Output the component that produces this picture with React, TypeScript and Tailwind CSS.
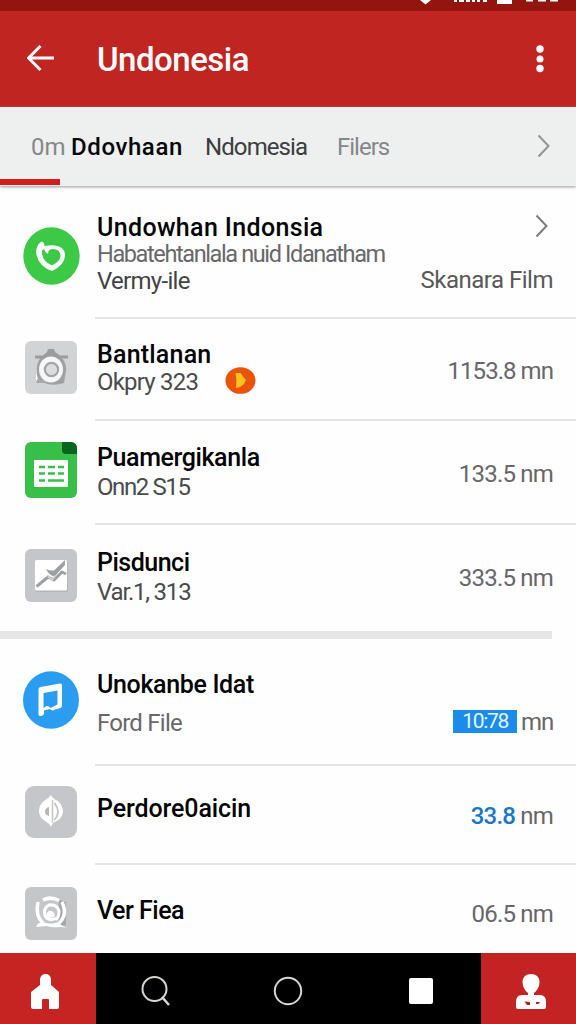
import type { ReactNode } from "react"

const tile = "flex items-center justify-center rounded-[6px] w-[52px]"

function CameraIcon() {
  return (
    <div className={`${tile} h-[53px] bg-[#d2d3d5]`}>
      <svg width="52" height="53" viewBox="0 0 52 53" fill="none">
        <path d="M10 14.500h8l4-3.500 1-3h6l1 3 5 3.500h8v3H10z" fill="#9b9c9e" />
        <path d="M11 27v15h10z" fill="#fff" />
        <path d="M15 17h22q5 6 4 13l-2 12q-8 3-17 1l-9-5q-4-10 2-21z" fill="#a0a1a3" />
        <path d="M11 42h12v-2l-11-2z" fill="#a8a9ab" />
        <ellipse cx="26" cy="28.500" rx="12" ry="13" fill="#f7f7f7" />
        <circle cx="26.500" cy="28.500" r="6.500" stroke="#a4a5a7" strokeWidth="2.500" />
        <circle cx="26.500" cy="28.500" r="5" fill="#dcdddf" />
      </svg>
    </div>
  )
}

function SheetIcon() {
  return (
    <svg width="52" height="56" viewBox="0 0 52 56">
      <rect width="52" height="56" rx="6" fill="#38bf49" />
      <path d="M37 0h9a6 6 0 0 1 6 6v6H41q-4 0-4-4z" fill="#08631d" />
      <rect x="9" y="18" width="34" height="27" rx="1" fill="#fff" />
      <path
        d="M14 25h6M23 25h7M33 25h6M14 31.500h6M23 31.500h7M33 31.500h6M14 38.500h6M23 38.500h16"
        stroke="#38bf49"
        strokeWidth="2.600"
      />
    </svg>
  )
}

function ChartIcon() {
  return (
    <div className={`${tile} h-[53px] bg-[#c5c6c9]`}>
      <svg width="52" height="53" viewBox="0 0 52 53" fill="none">
        <rect x="10" y="12" width="33" height="31" rx="2" fill="#b4b5b8" />
        <rect x="10" y="11" width="32" height="30.500" rx="1.500" fill="#fff" />
        <path d="M11.500 37.500l11.500-9.500 6 3 8-8 4 2" stroke="#9fa0a3" strokeWidth="3" />
        <path d="M21 20q4 2 8 1.500L40 11v5L30 27q-5 1-9-7z" fill="#9fa0a3" />
        <path d="M23 27l4 4 3-4" stroke="#d0d1d3" strokeWidth="2" />
      </svg>
    </div>
  )
}

function LeafIcon() {
  return (
    <div className="flex h-[52px] w-[52px] items-center justify-center rounded-[9px] bg-[#c5c6c9]">
      <svg width="52" height="52" viewBox="0 0 52 52" fill="none">
        <path d="M26 9q2 4 7 6 5 5 5 11-1 7-8 10-3 1-4 5-2-4-6-6-6-4-6-10 0-6 5-10 5-3 7-6z" fill="#fff" />
        <path d="M27.500 14v23" stroke="#c5c6c9" strokeWidth="1.500" />
        <path d="M24 21v9q-4-1-4-4.500T24 21z" fill="#b5b6b9" />
        <path d="M29.500 17q7 9 0 17" stroke="#c0c1c4" strokeWidth="1.800" />
      </svg>
    </div>
  )
}

function LensIcon() {
  return (
    <div className={`${tile} h-[53px] bg-[#c4c6c8]`}>
      <svg width="52" height="53" viewBox="0 0 52 53" fill="none">
        <path d="M34 13l7 2v23l-9 2z" fill="#a6a8ab" />
        <path d="M13 15q-3 14 5 21M18 13q8-4 16 .5M37 15q6 13-3 21" stroke="#fff" strokeWidth="3.500" />
        <path d="M11 40q2-5 7-5 8 3.500 15 0 3 4 9 5.500l-6-.500q-10 1-14-1z" fill="#fff" />
        <path d="M32 31q-8 4-12-2-2-8 4-11 8-1 10 6 0 6-3 9" stroke="#fff" strokeWidth="3" />
        <path d="M21 29q1-6 6-5 4 3 2 6-5 2-8-1z" fill="#fff" />
      </svg>
    </div>
  )
}

function CallIcon() {
  return (
    <svg width="57" height="58" viewBox="0 0 57 58" fill="none">
      <ellipse cx="28.500" cy="29" rx="28.200" ry="28.800" fill="#3cca46" />
      <path
        d="M18.500 14.500q2.500 0 3 4.500 4-1 9-.8 11 .8 11.500 9.300.5 10-13 16.500Q16.500 40 13.500 28q-1.500-9 5-13.500zM19 24q-.500 10 10 14.500 8-4 8.500-9.500 0-7-8-7-2.500 0-4 2l-.500 3-2.500-2-1.500-3q-1.500.500-2 2z"
        fill="#fff"
        fillRule="evenodd"
      />
    </svg>
  )
}

function MusicIcon() {
  return (
    <svg width="56" height="58" viewBox="0 0 56 58" fill="none">
      <ellipse cx="28" cy="29" rx="28" ry="28.800" fill="#2b9df1" />
      <path d="M15.500 18q0-1.500 2-2L37 12.500q2 0 2 1.500v20q0 3-3 3.500l-4 1q-3 2-5-.5l-4 1-2 .500v3q-.500 2-3 2.500-2 .500-2.500-1.500zM20.500 22v15l3-2q3 0 4 2l3-1.500 4-2V19.500z" fill="#fff" fillRule="evenodd" />
    </svg>
  )
}

function Chevron({ className }: { className: string }) {
  return (
    <svg width="14" height="24" viewBox="0 0 14 24" fill="none" className={className}>
      <path d="M1.500 1.500l10 10.500-10 10.500" stroke="currentColor" strokeWidth="2" />
    </svg>
  )
}

type Row = {
  height: string
  icon: ReactNode
  iconTop: string
  title: string
  titleStyle: string
  lines?: ReactNode
  value: ReactNode
}

const rows: Row[] = [
  {
    height: "h-[133px]",
    icon: <CallIcon />,
    iconTop: "pt-[41px] pl-[23px]",
    title: "Undowhan Indonsia",
    titleStyle: "mt-[28px] tracking-[0.35px]",
    lines: (
      <>
        <div className="leading-[27px] text-[23.500px] tracking-[-1.380px] text-[#67686a]">Habatehtanlala nuid Idanatham</div>
        <div className="leading-[27px] text-[24px] tracking-[-0.7px] text-[#424344]">Vermy-ile</div>
      </>
    ),
    value: (
      <div className="flex flex-col items-end tracking-[-0.5px]">
        <Chevron className="mt-[28px] mr-[4px] text-[#7c7d7f]" />
        <div className="mt-[29px] leading-[27px] text-[24px] text-[#58595b]">Skanara Film</div>
      </div>
    ),
  },
  {
    height: "h-[102px]",
    icon: <CameraIcon />,
    iconTop: "pt-[22px] pl-[25px]",
    title: "Bantlanan",
    titleStyle: "mt-[22px] tracking-[0.2px]",
    lines: (
      <div className="flex items-start">
        <span className="mt-[1px] w-[101px] leading-[27px] text-[24px] tracking-[-0.8px] text-[#4a4b4c]">Okpry 323</span>
        <svg width="31" height="27" viewBox="0 0 31 27" className="-mt-[1px] ml-[27px] shrink-0">
          <ellipse cx="15.500" cy="13.500" rx="15" ry="13.300" fill="#ea5309" />
          <path d="M10.500 6h5l1.500 2 4 5-2 4-4 3-4 1 .5-8z" fill="#ffc31f" />
        </svg>
      </div>
    ),
    value: <div className="mt-[39px] tracking-[-0.95px]">1153.8 mn</div>,
  },
  {
    height: "h-[104px]",
    icon: <SheetIcon />,
    iconTop: "pt-[21px] pl-[25px]",
    title: "Puamergikanla",
    titleStyle: "mt-[23px] tracking-[-0.4px]",
    lines: <div className="mt-[3px] leading-[27px] text-[24px] tracking-[-1.4px] text-[#4a4b4c]">Onn2 S15</div>,
    value: <div className="mt-[40px]">133.5 nm</div>,
  },
  {
    height: "h-[106px]",
    icon: <ChartIcon />,
    iconTop: "pt-[24px] pl-[25px]",
    title: "Pisdunci",
    titleStyle: "mt-[24px] tracking-[-0.5px]",
    lines: <div className="mt-[3px] leading-[27px] text-[24px] tracking-[-1.2px] text-[#4a4b4c]">Var.1, 313</div>,
    value: <div className="mt-[40px]">333.5 nm</div>,
  },
  {
    height: "h-[127px]",
    icon: <MusicIcon />,
    iconTop: "pt-[32px] pl-[23px]",
    title: "Unokanbe Idat",
    titleStyle: "mt-[32px] tracking-[-0.35px]",
    lines: <div className="mt-[12px] leading-[27px] text-[24px] tracking-[-0.75px] text-[#67686a]">Ford File</div>,
    value: (
      <div className="mt-[70px] flex items-start gap-[4px]">
        <span className="mt-[1px] h-[23px] w-[64px] bg-[#1c8ceb] text-center leading-[23px] text-[21px] tracking-[-1.3px] text-[#e8f5ff]">10:78</span>
        <span className="tracking-[-1.2px]">mn</span>
      </div>
    ),
  },
  {
    height: "h-[99px]",
    icon: <LeafIcon />,
    iconTop: "pt-[20px] pl-[25px]",
    title: "Perdore0aicin",
    titleStyle: "mt-[29px] tracking-[-0.1px]",
    value: (
      <div className="mt-[37px]">
        <span className="font-medium text-[#1976c9]">33.8</span> nm
      </div>
    ),
  },
  {
    height: "h-[88px]",
    icon: <LensIcon />,
    iconTop: "pt-[22px] pl-[25px]",
    title: "Ver Fiea",
    titleStyle: "mt-[32px] tracking-[-0.5px]",
    value: <div className="mt-[36px]">06.5 nm</div>,
  },
]

function ListRow({ row, divider }: { row: Row; divider: boolean }) {
  return (
    <div className={`flex ${row.height}`}>
      <div className={`w-[95px] shrink-0 ${row.iconTop}`}>{row.icon}</div>
      <div className={`flex flex-1 justify-between pl-[2px] pr-[23px] whitespace-nowrap ${divider ? "border-b-2 border-[#e3e4e6]" : ""}`}>
        <div className="w-0">
          <div className={`leading-[27px] text-[25px] font-medium text-[#050505] ${row.titleStyle}`}>{row.title}</div>
          {row.lines}
        </div>
        <div className="leading-[27px] text-[24px] tracking-[-0.8px] text-[#66676a]">{row.value}</div>
      </div>
    </div>
  )
}

export default function App() {
  return (
    <div className="flex h-[1024px] w-[576px] flex-col overflow-hidden bg-[#fefefe] font-['Roboto',sans-serif]">
      <div className="flex h-[11px] shrink-0 justify-end bg-[#941510]">
        <svg width="160" height="5" viewBox="0 0 160 5" fill="#fff">
          <path d="M4 0h11L9.500 4.500z" />
          <path d="M38 0h3v2h-3zM43 0h5v2h-5zM50 0h4v2h-4zM56 0h3v2h-3zM61 0h3v2h-3zM67 0h4v2h-4z" />
          <path d="M81 0h15v4H81zM110 0h7v1.500h-7zM122 0h8v1.500h-8zM134 0h8v1.500h-8z" />
        </svg>
      </div>

      <header className="flex h-[96px] shrink-0 items-center bg-[#c02522] text-white">
        <svg width="28" height="28" viewBox="0 0 28 28" fill="none" className="ml-[27px] shrink-0">
          <path d="M27 13H2M13.500 1L1.500 13l12 12" stroke="currentColor" strokeWidth="3" />
        </svg>
        <h1 className="ml-[42px] flex-1 pt-[1px] text-[33px] font-medium tracking-[-0.5px]">Undonesia</h1>
        <svg width="8" height="28" viewBox="0 0 8 28" fill="currentColor" className="mr-[32px]">
          <circle cx="4" cy="4" r="3.700" />
          <circle cx="4" cy="14" r="3.500" />
          <circle cx="4" cy="23.500" r="3.700" />
        </svg>
      </header>

      <nav className="flex h-[79px] shrink-0 flex-col justify-between bg-[#eeefef] shadow-[0_1px_3px_#999]">
        <div className="flex h-[72px] items-center pt-[7px] pl-[31px] pr-[25px] whitespace-nowrap text-[24px]">
          <span className="w-[34px] text-[#85878a]">0m</span>
          <span className="ml-[6px] w-[113px] font-medium tracking-[0.6px] text-[#080808]">Ddovhaan</span>
          <span className="ml-[21px] w-[102px] tracking-[-0.9px] text-[#3c3d3f]">Ndomesia</span>
          <span className="ml-[30px] tracking-[-1px] text-[#85878a]">Filers</span>
          <Chevron className="ml-auto mb-[1px] text-[#929496]" />
        </div>
        <div className="mb-[1px] h-[6px] w-[60px] bg-[#d31d1b]" />
      </nav>

      <main className="h-[767px] shrink-0">
        {rows.slice(0, 4).map((row, i) => (
          <ListRow key={row.title} row={row} divider={i < 3} />
        ))}
        <div className="h-[8px] w-[552px] bg-[#e6e6e7]" />
        {rows.slice(4).map((row, i) => (
          <ListRow key={row.title} row={row} divider={i < 2} />
        ))}
      </main>

      <footer className="flex h-[71px] shrink-0 bg-black">
        <div className="flex w-[96px] items-center justify-center bg-[#c52423] pt-[5px] pr-[6px]">
          <svg width="28" height="35" viewBox="0 0 28 35" fill="#fff">
            <path d="M9 5q1-5 5.500-5T20 5v6l8 7v15q0 2-2 2h-8v-9q0-1-1-1h-5q-1 0-1 1v9H2q-2 0-2-2V18l9-7z" />
          </svg>
        </div>
        <div className="flex flex-1 items-center justify-between pt-[5px] pl-[45px] pr-[48px]">
          <svg width="30" height="30" viewBox="0 0 30 30" fill="none" stroke="#d6d4d0" strokeWidth="2">
            <ellipse cx="13.500" cy="13" rx="12" ry="12" />
            <path d="M21 21l7 8" strokeWidth="2.500" />
          </svg>
          <svg width="30" height="30" viewBox="0 0 30 30" fill="none" className="mr-[5px]">
            <circle cx="15" cy="15" r="13.200" stroke="#d6d4d0" strokeWidth="2" />
          </svg>
          <div className="h-[26px] w-[24px] rounded-[2px] bg-white" />
        </div>
        <div className="flex w-[95px] items-center justify-center bg-[#c32423] pt-[5px] pl-[4px]">
          <svg width="30" height="35" viewBox="0 0 30 35" fill="#fff">
            <path d="M15 0q8 0 8.500 8-.2 7-5.500 11v2h6q6 0 6 7v5q0 2-2 2H2q-2 0-2-2v-5q0-7 6-7h6v-2Q6.700 15 6.500 8 7 0 15 0z" />
            <path d="M8.500 27.500l5.500.500v3h-3zM20 28h4l-1.500 2H20z" fill="#b5201f" />
          </svg>
        </div>
      </footer>
    </div>
  )
}
